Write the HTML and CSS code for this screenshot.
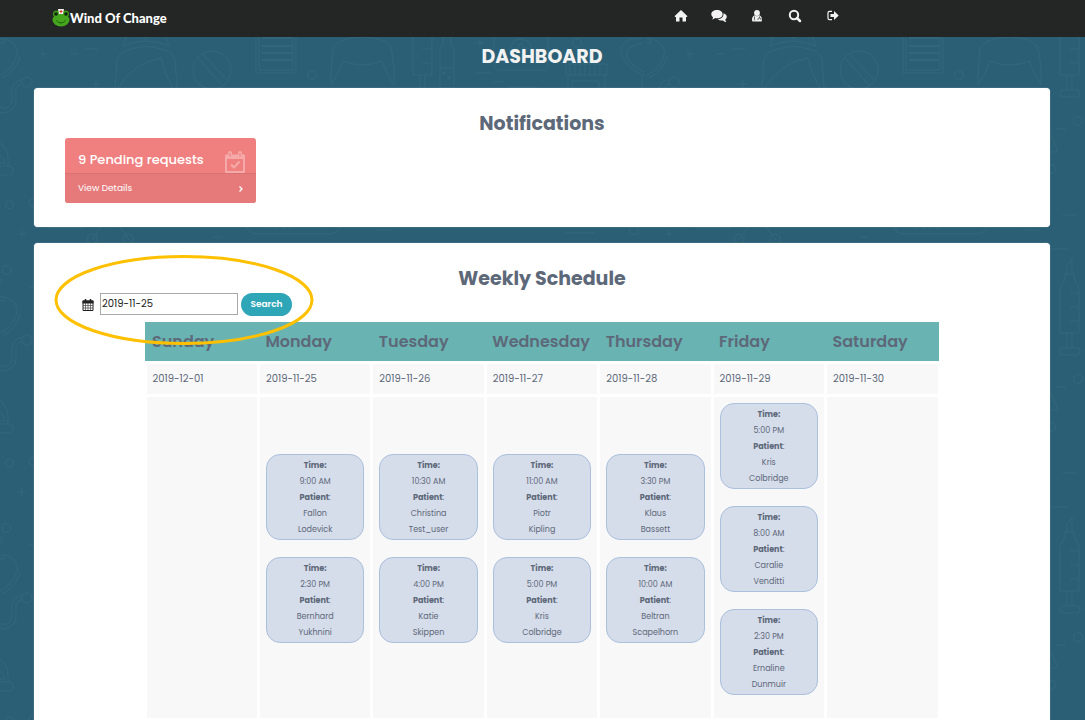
FILE: index.html
```html
<!DOCTYPE html>
<html lang="en">
<head>
<meta charset="utf-8">
<meta name="viewport" content="width=device-width, initial-scale=1">
<title>Wind Of Change - Dashboard</title>
<link rel="stylesheet" href="styles.css">
</head>
<body>
<svg class="backdrop" aria-hidden="true">
  <defs>
    <pattern id="medical" width="647" height="258" patternUnits="userSpaceOnUse">
      <g fill="none" stroke="#32667b" stroke-width="1">
        <path d="M-3 39h7v4h-7zM4 39C14 40 19 50 17 55C14 65 7 72 0 75M20 56C18 66 10 74 2 78M0 107C8 111 12 105 12 98V90C12 84 17 80 22 80M-3 112C9 115 16 108 16 100V91C16 87 19 84 22 84"/>
        <circle cx="27" cy="82" r="5"/>
        <path d="M0 143Q8 148 8 160V166M0 155Q5 158 5 163H0M0 166H9Q13 166 13 170.500T9 175H0"/>
        <circle cx="9.500" cy="205" r="4"/><circle cx="6.500" cy="12" r="4.500"/><circle cx="-2" cy="24" r="4"/>
        <path d="M642 39h-12C616 46 617 63 645 76M642 43C620 47 622 62 645 72M642 76v30M648 76v30M642 112Q640 108 636 112"/>
        <circle cx="33" cy="203" r="4"/><circle cx="312" cy="75" r="4.500"/><circle cx="577" cy="43" r="4.500"/><circle cx="634" cy="230" r="4.500"/>
        <circle cx="431" cy="121" r="4.500"/><circle cx="404" cy="169" r="4.500"/>
        <path d="M39 54h8M43 50v8M92 84h8M96 80v8M18 234h8M22 230v8M476 43h8M480 39v8"/>
        <path d="M70 54h8M84 49h14M475 73h17M492 82h11M507 87h30M48 228h35M213 237h9M376 230h16M565 233h30M409 129h10M416 215h14M404 249h18M29 29h6"/>
        <path d="M123 46L129 30Q146 22 163 30L169 46Q146 36 123 46ZM141 37h9M145.500 33v6M115 88L117 59Q121 51 131 49Q146 44 161 49Q172 51 175 59L177 88M118 88Q133 63 161 58Q164 73 173 88"/>
        <circle cx="212" cy="70" r="19"/><path d="M198 58L222 85M203 54L227 80"/>
        <path d="M256 22h40v51h-40zM259 22h34v48h-34z"/><path d="M262 38h30M262 46h30M262 53h30M262 60h30" stroke-width="2"/>
        <path d="M331 85Q331 64 333 48Q340 37 363 37Q387 38 391 48Q395 68 394 85Q387 75 382 61Q363 69 343 61Q339 74 331 85Z"/>
        <path d="M420 16V8L425 1V16M418 16h9V21L432 30V75H413V30L418 21ZM423 35h8M423 49h8M423 63h8M420 75v15M425 75v15M416 90h14q3 0 3 3.500t-3 3.500h-14q-3 0-3-3.500t3-3.500"/>
        <path d="M443 37h8v7l3 5v39h-14V49l3-5zM440 68h14"/><circle cx="444" cy="73" r="1"/><circle cx="449" cy="78" r="1"/>
        <rect x="494" y="30" width="54" height="40" rx="5"/><circle cx="521" cy="50" r="11"/><path d="M519 44h4v4h4v4h-4v4h-4v-4h-4v-4h4z"/>
        <path d="M566 64h41v11h-41zM568 75v18h37V75M572 81h27v12M572 93V81M570 64v11M575 64v11M580 64v11M585 64v11M590 64v11M595 64v11M600 64v11"/>
        <path d="M101 227L92 240M120 227L129 240"/><circle cx="92" cy="239" r="5"/><circle cx="128" cy="239" r="5"/>
        <path d="M247 227Q249 234 258 234H329Q337 234 340 227M268 230l3-3M275 230l3-3M282 230l3-3M289 230l3-3M404 135L411 152H404"/>
      </g>
    </pattern>
  </defs>
  <rect width="100%" height="100%" fill="url(#medical)"/>
</svg>

<header class="topbar">
  <a class="brand" href="#">
    <svg class="brand-logo" viewBox="0 0 18 18" aria-hidden="true">
      <circle cx="4.500" cy="5" r="3.500" fill="#3e9c1b"/><circle cx="13.500" cy="5" r="3.500" fill="#3e9c1b"/>
      <ellipse cx="9" cy="11" rx="8.500" ry="6.500" fill="#45a51d"/>
      <circle cx="4" cy="5" r="1.800" fill="#11240c"/><circle cx="14" cy="5" r="1.800" fill="#11240c"/>
      <path d="M6 0h6l-1 5H7z" fill="#f5f1ee"/><path d="M9 1v3M7.500 2.500h3" stroke="#d4382f" stroke-width="1"/>
      <path d="M4.500 11.500Q9 16.500 13.500 11.500" fill="none" stroke="#1c5b0c" stroke-width="1"/>
    </svg>
    <span>Wind Of Change</span>
  </a>
  <nav class="menu" aria-label="Main">
    <a href="#" aria-label="Home"><svg class="menu-icon" viewBox="0 0 16 14"><path d="M8 1L14.500 7.200L13.700 8H13V12.500H9.500V8.500H6.500V12.500H3V8H2.300L1.500 7.200Z"/></svg></a>
    <a href="#" aria-label="Messages"><svg class="menu-icon" viewBox="0 0 16 14"><path d="M6 1C9.300 1 11.600 2.700 11.600 5.200S9.300 9.300 6 9.300Q5 9.300 4.200 9.100Q2.800 10.500 1 10.500Q2 9.500 2 8.200Q.300 7 .300 5.200C.300 2.700 2.700 1 6 1Z"/><path d="M12.600 4.200Q15.800 5.300 15.800 7.800Q15.800 9.500 14.300 10.600Q14.300 12 15.400 13Q13.500 13 12 11.500Q8.500 12 6.800 10.300Q12.600 9.800 12.600 4.200Z"/></svg></a>
    <a href="#" aria-label="Doctor"><svg class="menu-icon" viewBox="0 0 16 14"><circle cx="8" cy="4" r="2.900"/><path d="M5.600 6.300Q8 8.300 10.400 6.300Q13 7.200 13 11Q13 12.500 12 12.500H4Q3 12.500 3 11Q3 7.200 5.600 6.300Z"/><path d="M5.500 7.500V10M10.500 7.500V9M9 11V10Q9 9 10.500 9T12 10V11M4.800 10.800h1.400" fill="none" stroke="#242625" stroke-width=".7"/></svg></a>
    <a href="#" aria-label="Search"><svg class="menu-icon" viewBox="0 0 16 14"><circle cx="7" cy="6" r="4.200" fill="none" stroke="currentColor" stroke-width="2"/><path d="M10 9L13 12" stroke="currentColor" stroke-width="2.500" stroke-linecap="round"/></svg></a>
    <a href="#" aria-label="Sign out"><svg class="menu-icon" viewBox="0 0 16 14"><path d="M7 2.300H4.500Q3 2.300 3 3.800V9.200Q3 10.700 4.500 10.700H7" fill="none" stroke="currentColor" stroke-width="1.200"/><path d="M5.500 5H9V2L13.700 6.500L9 11V8H5.500Z"/></svg></a>
  </nav>
</header>

<main class="page">
  <h1 class="page-title">DASHBOARD</h1>

  <section class="panel">
    <h2 class="panel-title">Notifications</h2>
    <div class="notice">
      <div class="notice-main">
        <span>9 Pending requests</span>
        <svg class="notice-icon" viewBox="0 0 22 22" aria-hidden="true"><path d="M2 4.500H20V21H2ZM7 13.500L10 16.500L15.500 10.500" fill="none" stroke="currentColor" stroke-width="2" stroke-linejoin="round"/><path d="M2 4h18v4H2z" fill="currentColor"/><path d="M6 2V5M16 2V5" stroke="currentColor" stroke-width="4" stroke-linecap="round"/><path d="M6 2.500V5M16 2.500V5" stroke="#f08080" stroke-width="1.200" stroke-linecap="round"/></svg>
      </div>
      <a class="notice-link" href="#">
        <span>View Details</span>
        <svg class="chevron" viewBox="0 0 6 8" aria-hidden="true"><path d="M1.500 1.500L4 4L1.500 6.500" fill="none" stroke="currentColor" stroke-width="1.300"/></svg>
      </a>
    </div>
  </section>

  <section class="panel panel-schedule">
    <h2 class="panel-title">Weekly Schedule</h2>
    <form class="search">
      <label for="week" aria-label="Week"><svg class="cal-icon" viewBox="0 0 12 12"><path d="M1 2H11V11.500H1Z" fill="#fff" stroke="#222" stroke-width="1"/><path d="M.500 1.500h11v3H.500z" fill="#222"/><path d="M3.500 0v3M8.500 0v3" stroke="#222" stroke-width="1.500"/><path d="M3.500 4v7M6 4v7M8.500 4v7M1 6.500h10M1 9h10" stroke="#444" stroke-width=".7"/></svg></label>
      <input id="week" class="search-input" type="text" value="2019-11-25">
      <button class="search-button" type="button">Search</button>
    </form>
    <table class="schedule">
      <thead>
        <tr><th>Sunday</th><th>Monday</th><th>Tuesday</th><th>Wednesday</th><th>Thursday</th><th>Friday</th><th>Saturday</th></tr>
      </thead>
      <tbody>
        <tr class="dates"><td>2019-12-01</td><td>2019-11-25</td><td>2019-11-26</td><td>2019-11-27</td><td>2019-11-28</td><td>2019-11-29</td><td>2019-11-30</td></tr>
        <tr class="slots">
          <td></td>
          <td>
            <div class="visit"><b>Time:</b><span>9:00 AM</span><span><b>Patient</b>:</span><span>Fallon</span><span>Lodevick</span></div>
            <div class="visit"><b>Time:</b><span>2:30 PM</span><span><b>Patient</b>:</span><span>Bernhard</span><span>Yukhnini</span></div>
          </td>
          <td>
            <div class="visit"><b>Time:</b><span>10:30 AM</span><span><b>Patient</b>:</span><span>Christina</span><span>Test_user</span></div>
            <div class="visit"><b>Time:</b><span>4:00 PM</span><span><b>Patient</b>:</span><span>Katie</span><span>Skippen</span></div>
          </td>
          <td>
            <div class="visit"><b>Time:</b><span>11:00 AM</span><span><b>Patient</b>:</span><span>Piotr</span><span>Kipling</span></div>
            <div class="visit"><b>Time:</b><span>5:00 PM</span><span><b>Patient</b>:</span><span>Kris</span><span>Colbridge</span></div>
          </td>
          <td>
            <div class="visit"><b>Time:</b><span>3:30 PM</span><span><b>Patient</b>:</span><span>Klaus</span><span>Bassett</span></div>
            <div class="visit"><b>Time:</b><span>10:00 AM</span><span><b>Patient</b>:</span><span>Beltran</span><span>Scapelhorn</span></div>
          </td>
          <td>
            <div class="visit"><b>Time:</b><span>5:00 PM</span><span><b>Patient</b>:</span><span>Kris</span><span>Colbridge</span></div>
            <div class="visit"><b>Time:</b><span>8:00 AM</span><span><b>Patient</b>:</span><span>Caralie</span><span>Venditti</span></div>
            <div class="visit"><b>Time:</b><span>2:30 PM</span><span><b>Patient</b>:</span><span>Ernaline</span><span>Dunmuir</span></div>
          </td>
          <td></td>
        </tr>
      </tbody>
    </table>
    <svg class="highlight" viewBox="0 0 260 92" aria-hidden="true"><ellipse cx="130" cy="46" rx="128" ry="43.500" fill="none" stroke="#ffc000" stroke-width="3"/></svg>
  </section>
</main>
</body>
</html>
```

FILE: styles.css
```css
* { box-sizing: border-box; }

body {
  position: relative;
  display: flex;
  flex-direction: column;
  min-height: 100vh;
  margin: 0;
  background: #2b5f75;
  color: #5d6879;
  font-family: Poppins, Inter, "Open Sans", sans-serif;
}

a { color: inherit; text-decoration: none; }

.backdrop {
  position: absolute;
  z-index: -1;
  width: 100%;
  height: 100%;
}

.topbar {
  display: flex;
  align-items: center;
  justify-content: space-between;
  height: 37px;
  padding: 0 244px 2px 52px;
  background: #242625;
  color: #f2f2f2;
}

.brand {
  display: flex;
  align-items: center;
  color: #fff;
  font-family: Lato, sans-serif;
  font-size: 13px;
  font-weight: 900;
}

.brand-logo { width: 18px; height: 18px; }

.menu { display: flex; gap: 22px; padding-bottom: 4px; }
.menu a { display: flex; }
.menu-icon { width: 16px; height: 14px; fill: currentColor; }

.page {
  display: flex;
  flex: 1;
  flex-direction: column;
  padding: 0 35px 0 34px;
}

.page-title {
  margin: 0 0 11px;
  color: #f2f2f2;
  font-size: 19px;
  font-weight: 700;
  line-height: 40px;
  text-align: center;
}

.panel {
  position: relative;
  padding: 22px 31px 24px;
  border-radius: 4px;
  background: #fff;
  box-shadow: 0 0 1px #d8e2e8;
}

.panel-schedule {
  flex: 1;
  margin-top: 16px;
  padding-bottom: 0;
  border-radius: 4px 4px 0 0;
}

.panel-title {
  margin: 0;
  font-size: 19px;
  font-weight: 700;
  line-height: 28px;
  text-align: center;
}

.notice {
  width: 191px;
  overflow: hidden;
  border-radius: 3px;
  background: #f08080;
  color: #fff;
}

.notice-main {
  display: flex;
  align-items: flex-end;
  justify-content: space-between;
  height: 35px;
  padding: 0 10px 0 13px;
  font-size: 13px;
  font-weight: 500;
  line-height: 26px;
}

.notice-icon { width: 22px; height: 22px; color: #f6a9a9; }

.notice-link {
  display: flex;
  align-items: center;
  justify-content: space-between;
  height: 30px;
  padding: 0 12px 0 13px;
  border-top: 1px solid #d87373;
  background: #e67a7a;
  font-size: 9px;
}

.chevron { width: 6px; height: 8px; }

.search {
  display: flex;
  height: 23px;
  margin: 0 0 6px 17px;
}

.search label { display: flex; align-items: center; width: 18px; }
.cal-icon { width: 12px; height: 12px; }

.search-input {
  width: 138px;
  height: 22px;
  margin-right: 3px;
  padding: 0 1px;
  border: 1px solid #a9a9a9;
  background: #fff;
  color: #222;
  font: inherit;
  font-size: 10px;
}

.search-button {
  width: 51px;
  height: 23px;
  padding: 0;
  border: 0;
  border-radius: 12px;
  background: #2fa5b8;
  color: #fff;
  font: inherit;
  font-size: 9px;
  font-weight: 600;
}

.schedule {
  width: calc(100% - 157px);
  margin: 0 auto;
  border-collapse: collapse;
  table-layout: fixed;
}

.schedule th {
  height: 40px;
  padding: 0 7px;
  background: #69b3b2;
  font-size: 16px;
  font-weight: 600;
  text-align: left;
}

.schedule td {
  border: 3px solid #fff;
  background: #f8f8f8;
}

.dates td {
  height: 33px;
  padding: 0 6px;
  font-size: 10px;
}

.slots td { height: 324px; padding: 6px; }

.visit {
  display: flex;
  flex-direction: column;
  margin-bottom: 17px;
  padding: 3px 0 1px;
  border: 1px solid #aac0dd;
  border-radius: 14px;
  background: #d5dcea;
  font-size: 8px;
  line-height: 16px;
  text-align: center;
}

.highlight {
  position: absolute;
  top: 11px;
  left: 20px;
  width: 260px;
  height: 92px;
  pointer-events: none;
}
```
